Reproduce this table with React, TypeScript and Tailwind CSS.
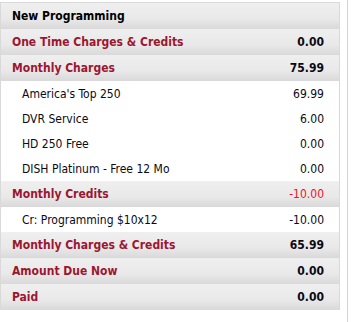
const rows: { kind: "head" | "item"; label: string; value: string; tone?: "red" | "black" }[] = [
  { kind: "head", label: "New Programming", value: "", tone: "black" },
  { kind: "head", label: "One Time Charges & Credits", value: "0.00" },
  { kind: "head", label: "Monthly Charges", value: "75.99" },
  { kind: "item", label: "America's Top 250", value: "69.99" },
  { kind: "item", label: "DVR Service", value: "6.00" },
  { kind: "item", label: "HD 250 Free", value: "0.00" },
  { kind: "item", label: "DISH Platinum - Free 12 Mo", value: "0.00" },
  { kind: "head", label: "Monthly Credits", value: "-10.00", tone: "red" },
  { kind: "item", label: "Cr: Programming $10x12", value: "-10.00" },
  { kind: "head", label: "Monthly Charges & Credits", value: "65.99" },
  { kind: "head", label: "Amount Due Now", value: "0.00" },
  { kind: "head", label: "Paid", value: "0.00" },
];

export default function App() {
  return (
    <div className="flex h-[322px] w-[355px] bg-white font-['DejaVu_Sans_Condensed','Liberation_Sans',sans-serif]">
      <div className="mt-[2px] w-[340px] self-start border border-b-0 border-[#d9d9d9]">
        {rows.map((row) =>
          row.kind === "head" ? (
            <div
              key={row.label}
              className="flex h-[26px] items-center justify-between bg-[linear-gradient(#efefef,#e9e9e9_60%,#d9d9d9)] pl-[11px] pr-[15px] text-[12px] font-bold"
            >
              <span className={row.tone === "black" ? "text-black" : "text-[#9c1630]"}>{row.label}</span>
              <span className={row.tone === "red" ? "font-normal text-[#f0141e]" : "text-[#0a0a14]"}>{row.value}</span>
            </div>
          ) : (
            <div
              key={row.label}
              className="flex h-[25px] items-center justify-between bg-white pl-[21px] pr-[15px] text-[12px] text-[#0a0a14]"
            >
              <span>{row.label}</span>
              <span>{row.value}</span>
            </div>
          )
        )}
      </div>
      <div className="ml-[7px] w-px bg-[#d4d4d4]" />
    </div>
  );
}
